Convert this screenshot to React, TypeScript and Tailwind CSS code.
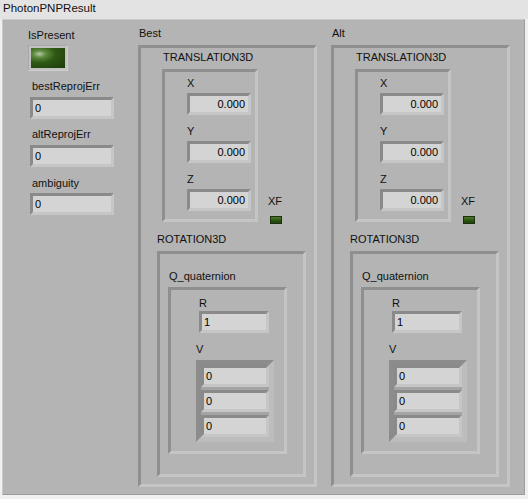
import React from "react";

const FRAME =
  "border-[3px] border-t-[#8f8f8f] border-l-[#8f8f8f] border-b-[#c5c5c5] border-r-[#c5c5c5]";

function Label({ children, className = "" }: { children: React.ReactNode; className?: string }) {
  return (
    <div className={`text-[11px] leading-[13px] text-[#111111] whitespace-nowrap ${className}`}>
      {children}
    </div>
  );
}

function Num({ value, right = false, className = "" }: { value: string; right?: boolean; className?: string }) {
  return (
    <div
      className={`h-[22px] border-[3px] border-t-[#8a8a8a] border-l-[#8a8a8a] border-b-[#c6c6c6] border-r-[#c6c6c6] bg-[#d4d4d4] text-[11px] leading-[16px] text-black whitespace-nowrap ${
        right ? "text-right pr-[3px]" : "pl-[2px]"
      } ${className}`}
    >
      {value}
    </div>
  );
}

function Cluster({ name }: { name: string }) {
  return (
    <div className="flex flex-col w-[179px] mt-[7px]">
      <Label className="ml-[1px]">{name}</Label>
      <div className={`mt-[5px] h-[442px] flex flex-col ${FRAME}`}>
        <Label className="ml-[22px] mt-[3px]">TRANSLATION3D</Label>
        <div className="flex items-start mt-[5px] ml-[21px]">
          <div className={`w-[96px] h-[153px] flex flex-col ${FRAME}`}>
            <Label className="ml-[22px] mt-[5px]">X</Label>
            <Num value="0.000" right className="ml-[22px] mt-[3px] w-[64px]" />
            <Label className="ml-[22px] mt-[10px]">Y</Label>
            <Num value="0.000" right className="ml-[22px] mt-[3px] w-[64px]" />
            <Label className="ml-[22px] mt-[10px]">Z</Label>
            <Num value="0.000" right className="ml-[22px] mt-[3px] w-[64px]" />
          </div>
          <div className="ml-[10px] mt-[126px] flex flex-col">
            <Label>XF</Label>
            <div className="mt-[8px] ml-[2px] w-[12px] h-[8px] border border-[#1b330a] bg-[linear-gradient(180deg,#4c7a2c_0%,#2c5312_60%,#1f3f0b_100%)]" />
          </div>
        </div>
        <Label className="ml-[16px] mt-[9px]">ROTATION3D</Label>
        <div className={`ml-[16px] mt-[5px] w-[149px] h-[226px] flex flex-col ${FRAME}`}>
          <Label className="ml-[9px] mt-[16px]">Q_quaternion</Label>
          <div className={`ml-[8px] mt-[4px] w-[119px] h-[167px] flex flex-col ${FRAME}`}>
            <Label className="ml-[28px] mt-[7px]">R</Label>
            <Num value="1" className="ml-[28px] mt-[1px] w-[70px]" />
            <Label className="ml-[25px] mt-[10px]">V</Label>
            <div className="ml-[25px] mt-[4px] w-[78px] h-[82px] border-[5px] border-t-[#8c8c8c] border-l-[#8c8c8c] border-b-[#bdbdbd] border-r-[#bdbdbd] bg-[#a4a4a4] flex flex-col gap-[3px]">
              <Num value="0" className="w-[68px]" />
              <Num value="0" className="w-[68px]" />
              <Num value="0" className="w-[68px]" />
            </div>
          </div>
        </div>
      </div>
    </div>
  );
}

export default function App() {
  return (
    <div className="w-[528px] h-[499px] bg-[#f0f0f0] font-['Liberation_Sans',Arial,sans-serif] overflow-hidden flex flex-col">
      <div className="h-[19px] pl-[3px] pt-[1px] bg-[#e3e3e3] text-[11.5px] leading-[14px] text-[#111111] whitespace-nowrap">
        PhotonPNPResult
      </div>
      <div className="flex">
        <div className="ml-[2px] w-[523px] h-[476px] bg-[#b4b4b4] border border-t-[#cacaca] border-l-[#cacaca] border-b-[#9c9c9c] border-r-[#9c9c9c] flex items-start">
          <div className="ml-[25px] w-[110px] flex flex-col mt-[9px]">
            <Label>IsPresent</Label>
            <div className="mt-[3px] w-[40px] h-[26px] p-[2px] bg-[#c2c2c2] border border-t-[#a8a8a8] border-l-[#a8a8a8] border-b-[#cfcfcf] border-r-[#cfcfcf]">
              <div className="w-full h-full bg-[radial-gradient(ellipse_at_25%_30%,#b9c7ab_0%,#5c8a3c_18%,#2e5714_45%,#1d3b0a_100%)]" />
            </div>
            <Label className="ml-[4px] mt-[9px]">bestReprojErr</Label>
            <Num value="0" className="ml-[2px] mt-[4px] w-[84px]" />
            <Label className="ml-[4px] mt-[9px]">altReprojErr</Label>
            <Num value="0" className="ml-[2px] mt-[4px] w-[84px]" />
            <Label className="ml-[4px] mt-[10px]">ambiguity</Label>
            <Num value="0" className="ml-[2px] mt-[3px] w-[84px]" />
          </div>
          <Cluster name="Best" />
          <div className="ml-[14px]">
            <Cluster name="Alt" />
          </div>
        </div>
      </div>
      <div className="flex-1 bg-[#f0f0f0]" />
    </div>
  );
}
